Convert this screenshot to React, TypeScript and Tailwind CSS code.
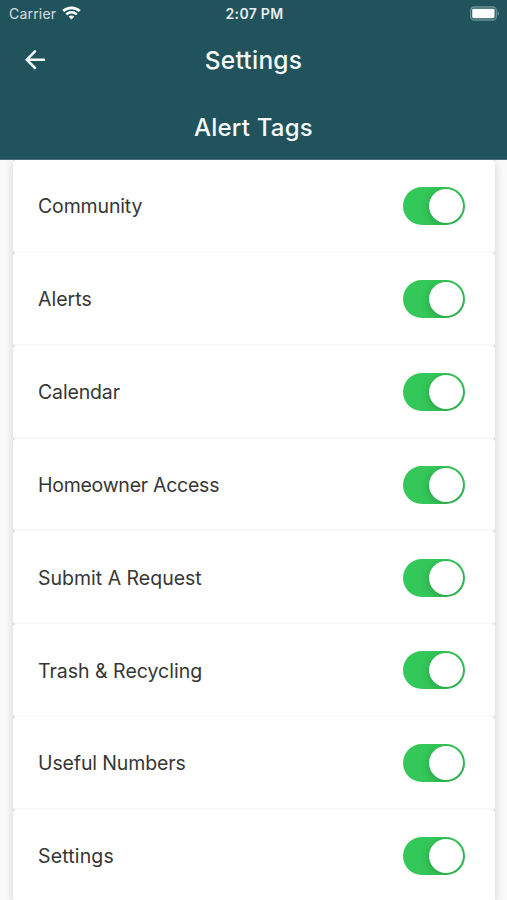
import { useState } from 'react';

const TAGS = [
  { name: 'Community', tracking: 'tracking-[-0.15px]' },
  { name: 'Alerts', tracking: 'tracking-normal' },
  { name: 'Calendar', tracking: 'tracking-[-0.15px]' },
  { name: 'Homeowner Access', tracking: 'tracking-[-0.26px]' },
  { name: 'Submit A Request', tracking: 'tracking-normal' },
  { name: 'Trash & Recycling', tracking: 'tracking-normal' },
  { name: 'Useful Numbers', tracking: 'tracking-[-0.12px]' },
  { name: 'Settings', tracking: 'tracking-[0.15px]' },
];

function StatusBar() {
  return (
    <div className="grid h-7 grid-cols-3 items-center pl-[9px] pr-[7px] text-white/90">
      <div className="flex items-center gap-[6px]">
        <span className="text-[14px] leading-none tracking-[0.2px] text-white/80">Carrier</span>
        <svg width="19" height="14" viewBox="0 0 19 14" fill="none" className="-mt-[2px] text-white">
          <path d="M1.2 5.1C5.9.7 13.1.7 17.8 5.1" stroke="currentColor" strokeWidth="2.7" />
          <path d="M4.3 8.4c3-2.8 7.4-2.8 10.4 0" stroke="currentColor" strokeWidth="2.4" />
          <path d="M9.5 13.6 6.6 10.6c1.6-1.5 4.2-1.5 5.8 0z" fill="currentColor" />
        </svg>
      </div>
      <span className="text-center text-[14px] font-semibold leading-none tracking-[0.3px]">2:07 PM</span>
      <svg width="31" height="15" viewBox="0 0 31 15" fill="none" className="-mt-[2px] justify-self-end">
        <rect x="1.7" y="1" width="25.6" height="13" rx="3.6" stroke="#6b9296" strokeWidth="1.3" />
        <rect x="3.2" y="2.8" width="22.4" height="9.4" rx="1.4" fill="#fff" />
        <path d="M28.7 5.2c1.8.7 1.8 3.9 0 4.6z" fill="#6b9296" />
      </svg>
    </div>
  );
}

function Toggle({ on, onChange }: { on: boolean; onChange: () => void }) {
  return (
    <button
      role="switch"
      aria-checked={on}
      onClick={onChange}
      className={`flex h-[38px] w-[62px] items-center overflow-hidden rounded-full p-[2px] ${on ? 'justify-end bg-[#34c759]' : 'justify-start bg-[#e9e9eb]'}`}
    >
      <span className="size-[34px] rounded-full bg-white shadow-[0_2px_8px_rgba(0,0,0,0.22)]" />
    </button>
  );
}

export default function App() {
  const [enabled, setEnabled] = useState<boolean[]>(TAGS.map(() => true));

  const toggle = (index: number) => {
    setEnabled(enabled.map((value, i) => (i === index ? !value : value)));
  };

  return (
    <div className="flex h-[900px] w-[507px] flex-col overflow-hidden bg-[#fafafa] font-['Inter',sans-serif]">
      <header className="relative z-10 h-40 shrink-0 border-b border-[#4a7179] bg-[#21535c] text-[#f4fafa]">
        <StatusBar />
        <div className="grid h-16 grid-cols-[64px_1fr_64px] items-center">
          <button aria-label="Back" className="pl-[25px]">
            <svg width="21" height="20" viewBox="0 0 21 20" fill="none" stroke="currentColor" strokeWidth="2.5" strokeLinecap="round">
              <path d="M19 9.7H2.4M10 1.4 1.8 9.7l8.2 8.3" />
            </svg>
          </button>
          <h1 className="text-center text-[24.5px] font-medium tracking-[0.25px]">Settings</h1>
        </div>
        <h2 className="pt-[19.5px] text-center text-2xl font-medium tracking-[0.2px]">Alert Tags</h2>
      </header>

      <main className="mr-[12px] ml-[13px] flex shrink-0 flex-col bg-[#d9d9d9] shadow-[0_2px_9px_rgba(0,0,0,0.17)]">
        {TAGS.map((tag, i) => (
          <div
            key={tag.name}
            className="flex h-[92.85px] shrink-0 items-center justify-between rounded-[3px] border-b-2 border-[#f8f8f8] bg-white pt-[1.6px] pl-[25px] pr-[30px]"
          >
            <span className={`pt-[1.5px] text-[19.5px] text-[#363636] ${tag.tracking}`}>{tag.name}</span>
            <Toggle on={enabled[i]} onChange={() => toggle(i)} />
          </div>
        ))}
      </main>
    </div>
  );
}
